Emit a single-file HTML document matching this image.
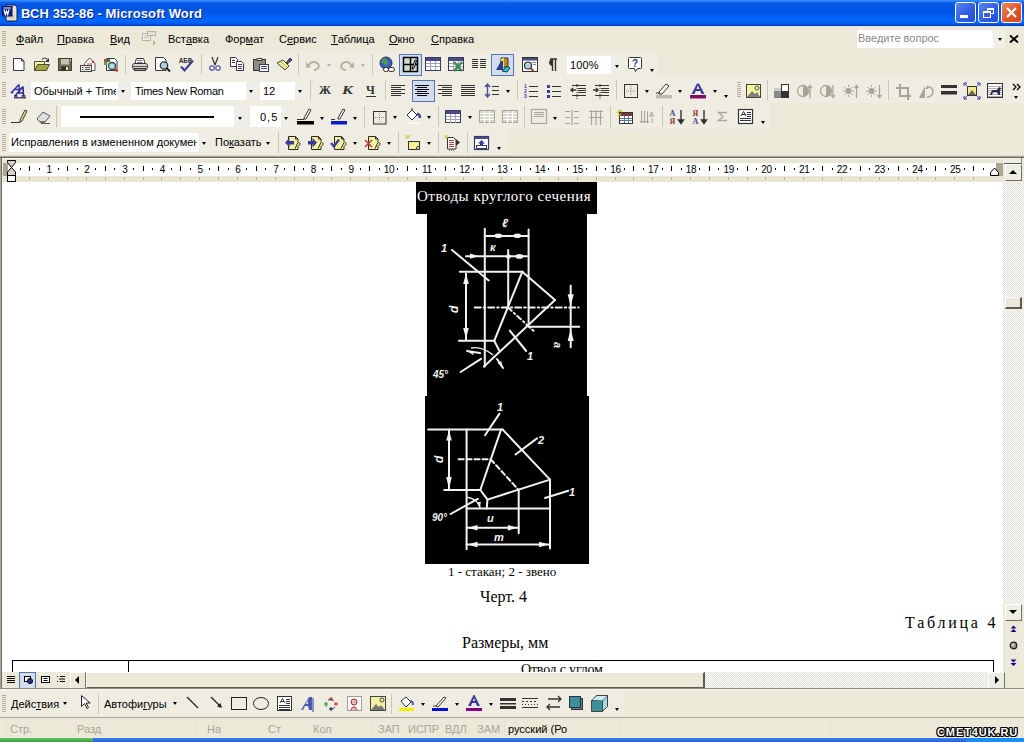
<!DOCTYPE html>
<html><head><meta charset="utf-8">
<style>
*{margin:0;padding:0;box-sizing:border-box}
html,body{width:1024px;height:742px;overflow:hidden;background:#ECE9D8;font-family:"Liberation Sans",sans-serif;font-size:11px;color:#000;position:relative}
.a{position:absolute;white-space:nowrap}
svg{overflow:visible}
.tb{background:#EFEDE2}
.grip{width:4px;background:repeating-linear-gradient(to bottom,#B4B09C 0 1px,transparent 1px 2px);border-left:1px solid transparent}
.wb{top:2px;width:21px;height:21px;border:1px solid #fff;border-radius:3px}
.ser{font-family:"Liberation Serif",serif}
.chk{background:repeating-conic-gradient(#FFFFFD 0 25%,#E2E0D6 0 50%) 0 0/2px 2px}
u{text-decoration:none;border-bottom:1px solid #000;display:inline-block;line-height:10px}
</style></head><body>

<div class="a" style="left:0;top:0;width:1024px;height:26px;background:linear-gradient(to bottom,#3D93FF 0px,#2A7FF6 1px,#0A5BE8 3px,#0054E3 8px,#0056E6 13px,#0062F6 17px,#0067FF 20px,#0062F4 23px,#0048D4 25px,#003AB0 26px)"></div>
<div class="a" style="left:0px;top:26px;width:1024px;height:1px;background:#DDE6F5"></div>
<div class="a" style="left:21px;top:6px;color:#fff;font-weight:bold;font-size:13px;letter-spacing:0.1px;text-shadow:1px 1px 0 #0A1E8C">ВСН 353-86 - Microsoft Word</div>
<svg class="a" style="left:2px;top:4px" width="17" height="17" viewBox="0 0 17 17"><path d="M4 1h9l2 2v14H4z" fill="#EDE6D6" stroke="#0A1A60" stroke-width="1"/><path d="M5 3h7M5 12h8M5 14h8" stroke="#C8B89A"/><rect x="0.5" y="2.5" width="9.5" height="9.5" fill="#0B1F8F" stroke="#081060"/><rect x="1.5" y="3.5" width="7.5" height="1" fill="#fff"/><path d="M2 5.5l1.3 5 1.2-3.5 1.2 3.5 1.3-5" stroke="#fff" stroke-width="1.3" fill="none"/></svg>
<div class="a wb" style="left:955px;background:linear-gradient(135deg,#5A86F5,#2E5BE0 60%,#2250D8)"><div class="a" style="left:4px;top:12px;width:8px;height:3px;background:#fff"></div></div>
<div class="a wb" style="left:978px;background:linear-gradient(135deg,#5A86F5,#2E5BE0 60%,#2250D8)"><div class="a" style="left:8px;top:5px;width:7px;height:6px;border:1px solid #fff;border-top-width:2px"></div><div class="a" style="left:4px;top:8px;width:8px;height:7px;border:1px solid #fff;border-top-width:2px;background:#3A62E4"></div></div>
<div class="a wb" style="left:1001px;background:linear-gradient(135deg,#EF8A64,#E2552C 55%,#D0431C)"><svg class="a" style="left:0;top:0" width="19" height="19"><path d="M5 5L14 14M14 5L5 14" stroke="#fff" stroke-width="2.2"/></svg></div>
<div class="a grip" style="left:2px;top:31px;height:16px"></div>
<div class="a" style="left:16px;top:33px;"><u>Ф</u>айл</div>
<div class="a" style="left:57px;top:33px;"><u>П</u>равка</div>
<div class="a" style="left:110px;top:33px;"><u>В</u>ид</div>
<div class="a" style="left:168px;top:33px;">Вст<u>а</u>вка</div>
<div class="a" style="left:225px;top:33px;">Фор<u>м</u>ат</div>
<div class="a" style="left:279px;top:33px;">С<u>е</u>рвис</div>
<div class="a" style="left:331px;top:33px;"><u>Т</u>аблица</div>
<div class="a" style="left:389px;top:33px;"><u>О</u>кно</div>
<div class="a" style="left:431px;top:33px;"><u>С</u>правка</div>
<svg class="a" style="left:141px;top:30px" width="17" height="17" viewBox="0 0 17 17"><rect x="1.5" y="3.5" width="8" height="7" fill="#F4F2EA" stroke="#B8B5A5"/><rect x="6.5" y="1.5" width="8" height="4" fill="#E4E1D4" stroke="#B8B5A5"/><path d="M3 6h5M3 8h5" stroke="#C0BDAE"/><path d="M12 10l3 3-3 3z" fill="#B8B5A5"/></svg>
<div class="a" style="left:857px;top:30px;width:136px;height:18px;background:#fff"></div>
<div class="a" style="left:993px;top:30px;width:12px;height:18px;background:#F0EFE8"></div>
<div class="a" style="left:858px;top:32px;color:#8C8C8C">Введите вопрос</div>
<div class="a" style="left:998px;top:38px;width:0;height:0;border-left:2.5px solid transparent;border-right:2.5px solid transparent;border-top:3px solid #000"></div>
<svg class="a" style="left:1009px;top:35px" width="10" height="8" viewBox="0 0 10 8"><path d="M1 0.5L9 7.5M9 0.5L1 7.5" stroke="#000" stroke-width="1.8"/></svg>
<div class="a" style="left:0px;top:51px;width:658px;height:26px;background:#EFEDE2"></div>
<div class="a" style="left:0px;top:77px;width:1024px;height:26px;background:#EFEDE2"></div>
<div class="a" style="left:0px;top:103px;width:770px;height:26px;background:#EFEDE2"></div>
<div class="a" style="left:0px;top:129px;width:507px;height:26px;background:#EFEDE2"></div>
<div class="a" style="left:0px;top:155px;width:1024px;height:1px;background:#E2DFD0"></div>
<div class="a" style="left:0px;top:156px;width:1024px;height:1px;background:#A6A394"></div>
<div class="a" style="left:0px;top:157px;width:1024px;height:1px;background:#6E6C5E"></div>
<div class="a grip" style="left:2px;top:56px;height:17px"></div>
<svg class="a" style="left:11px;top:56px" width="16" height="16" viewBox="0 0 16 16"><path d="M2.5 2.5h8l2.5 2.5v9.5h-10.5z" fill="#fff" stroke="#3A3A3A"/><path d="M10.5 2.5v2.5h2.5" fill="none" stroke="#3A3A3A"/></svg>
<svg class="a" style="left:33px;top:56px" width="17" height="16" viewBox="0 0 17 16"><path d="M1.5 5.5h4l1 1h5v2" fill="#F6F3B0" stroke="#505028"/><path d="M1.5 14.5v-9h10v3" fill="#F6F3B0" stroke="#505028"/><path d="M1.5 14.5l3-6h12l-3 6z" fill="#A6A448" stroke="#505028"/><path d="M9 3.5c1.5-2 4-2 5.5 0" stroke="#333" fill="none" stroke-width="1.2"/><path d="M16 2v4h-4z" fill="#333"/></svg>
<svg class="a" style="left:57px;top:56px" width="16" height="16" viewBox="0 0 16 16"><rect x="1.5" y="2.5" width="13" height="12" fill="#6E6D52" stroke="#3E3E2C"/><rect x="4" y="3" width="8" height="5.5" fill="#C4C2B0"/><rect x="4.5" y="10.5" width="7" height="4" fill="#2E2E22"/><rect x="9" y="11" width="2" height="3" fill="#E8E6D8"/><rect x="13" y="3.5" width="1" height="1.5" fill="#E8E6D8"/></svg>
<svg class="a" style="left:80px;top:56px" width="17" height="17" viewBox="0 0 17 17"><path d="M4.5 7.5l5-5.5 5.5 5.5v7h-10.5z" fill="#fff" stroke="#555"/><circle cx="13" cy="6" r="1.2" fill="#D03030"/><path d="M7 8h5" stroke="#C04040"/><rect x="0.5" y="9.5" width="11" height="6" fill="#ECEBDF" stroke="#444"/><path d="M2 11.5h1.5M5 11.5h5M2 13.5h1.5M5 13.5h5" stroke="#555"/></svg>
<svg class="a" style="left:103px;top:56px" width="16" height="17" viewBox="0 0 16 17"><path d="M3.5 2.5h8l2.5 2.5v9.5h-10.5z" fill="#fff" stroke="#3A3A3A"/><rect x="1" y="3" width="3" height="3" fill="#A05050"/><rect x="4" y="3" width="3" height="3" fill="#507050"/><rect x="1" y="6" width="3" height="3" fill="#6A9A50"/><rect x="4" y="6" width="3" height="3" fill="#E8E0A0"/><circle cx="9" cy="10" r="3.5" fill="#B8D8E4" stroke="#2A4A50" stroke-width="1.3"/><path d="M11.5 12.5l3 3" stroke="#C03030" stroke-width="2"/></svg>
<div class="a" style="left:125px;top:55px;width:1px;height:19px;background:#C9C6B6"></div>
<svg class="a" style="left:132px;top:56px" width="16" height="16" viewBox="0 0 16 16"><path d="M4.5 2.5h7l1 3v3h-9v-3z" fill="#fff" stroke="#333"/><path d="M5 4.5h5M5 6.5h5" stroke="#777"/><rect x="0.5" y="7.5" width="15" height="6" rx="2" fill="#D8D6CC" stroke="#333"/><path d="M1 10.5h14" stroke="#555"/><rect x="2.5" y="12.5" width="11" height="2" fill="#999" stroke="#333"/></svg>
<svg class="a" style="left:155px;top:56px" width="16" height="16" viewBox="0 0 16 16"><path d="M0.5 1.5h8l2.5 2.5v10.5h-10.5z" fill="#fff" stroke="#3A3A3A"/><circle cx="9" cy="9.5" r="3.7" fill="#B0D0DC" stroke="#333" stroke-width="1.3"/><path d="M11.5 12l3.5 3.5" stroke="#222" stroke-width="2"/></svg>
<svg class="a" style="left:178px;top:56px" width="16" height="16" viewBox="0 0 16 16"><text x="1" y="7" font-family="Liberation Mono" font-weight="bold" font-size="7" fill="#333" textLength="13" lengthAdjust="spacingAndGlyphs">АБВ</text><path d="M3 10.5l3.5 4 8.5-10" stroke="#3A3A9A" stroke-width="2" fill="none"/></svg>
<div class="a" style="left:201px;top:54px;width:1px;height:21px;background:#C9C6B6"></div>
<svg class="a" style="left:207px;top:56px" width="16" height="16" viewBox="0 0 16 16"><path d="M5 1l3 8M11 1l-3 8" stroke="#333" stroke-width="1.2"/><circle cx="5" cy="12" r="2.2" fill="#fff" stroke="#5A5AAA" stroke-width="1.3"/><circle cx="11" cy="12" r="2.2" fill="#fff" stroke="#5A5AAA" stroke-width="1.3"/></svg>
<svg class="a" style="left:229px;top:56px" width="16" height="16" viewBox="0 0 16 16"><path d="M1.5 1.5h5l2 2v7h-7z" fill="#fff" stroke="#333"/><path d="M3 4.5h3M3 6.5h3" stroke="#444"/><path d="M7.5 5.5h5l2 2v7h-7z" fill="#fff" stroke="#333"/><path d="M9 8.5h4M9 10.5h4M9 12.5h4" stroke="#3A3A9A"/></svg>
<svg class="a" style="left:253px;top:56px" width="16" height="16" viewBox="0 0 16 16"><rect x="0.5" y="3.5" width="12" height="11" fill="#8E8B76" stroke="#333"/><path d="M4 4.5v-2h5v2z" fill="#fff" stroke="#333"/><rect x="6.5" y="8.5" width="9" height="7" fill="#fff" stroke="#3A3A6A"/><path d="M8 10.5h6M8 12.5h6" stroke="#3A3A9A"/></svg>
<svg class="a" style="left:276px;top:56px" width="17" height="16" viewBox="0 0 17 16"><path d="M1 7l6-3 6 6-4 4z" fill="#F6F3A0" stroke="#444"/><path d="M3 8l6 5M5 6l6 5" stroke="#B8B060"/><path d="M10 7l4-5 2 2-5 4z" fill="#4A4A9A" stroke="#333"/></svg>
<div class="a" style="left:298px;top:54px;width:1px;height:21px;background:#C9C6B6"></div>
<svg class="a" style="left:305px;top:56px" width="16" height="16" viewBox="0 0 16 16"><path d="M4 11a5 4 0 1 1 5 3" stroke="#B5B2A2" stroke-width="2" fill="none"/><path d="M1 12l0-6 5 5z" fill="#B5B2A2"/></svg>
<div class="a" style="left:327px;top:64px;width:0;height:0;border-left:2.5px solid transparent;border-right:2.5px solid transparent;border-top:3px solid #B5B2A2"></div>
<svg class="a" style="left:339px;top:56px" width="16" height="16" viewBox="0 0 16 16"><path d="M12 11a5 4 0 1 0-5 3" stroke="#B5B2A2" stroke-width="2" fill="none"/><path d="M15 12l0-6-5 5z" fill="#B5B2A2"/></svg>
<div class="a" style="left:361px;top:64px;width:0;height:0;border-left:2.5px solid transparent;border-right:2.5px solid transparent;border-top:3px solid #B5B2A2"></div>
<div class="a" style="left:372px;top:54px;width:1px;height:21px;background:#C9C6B6"></div>
<svg class="a" style="left:379px;top:56px" width="16" height="17" viewBox="0 0 16 17"><circle cx="7" cy="7" r="6" fill="#3A5AC8" stroke="#334"/><path d="M5 2c3 1 5 3 4 6l-3 2-1-3-3 0c0-2 1-4 3-5z" fill="#4A9A5A"/><rect x="4.5" y="11.5" width="5" height="4" rx="2" fill="#fff" stroke="#222"/><rect x="9.5" y="11.5" width="6" height="4" rx="2" fill="#fff" stroke="#222"/></svg>
<div class="a" style="left:399px;top:54px;width:23px;height:22px;background:#D2DDF0;border:1px solid #5676AE"></div>
<svg class="a" style="left:403px;top:57px" width="15" height="15" viewBox="0 0 15 15"><rect x="0.5" y="0.5" width="14" height="14" fill="#D0DCD0" stroke="#000" stroke-width="1.5"/><path d="M7.5 0.5v14M0.5 7.5h14" stroke="#000" stroke-width="1.5"/><path d="M9 12l3-9 1.5 0.5-2.5 8z" fill="#fff" stroke="#000"/></svg>
<svg class="a" style="left:425px;top:57px" width="16" height="15" viewBox="0 0 16 15"><rect x="0.5" y="0.5" width="15" height="13" fill="#fff" stroke="#3A3A5A"/><rect x="1" y="1" width="14" height="3" fill="#4A4A8A"/><path d="M1 6.5h14M1 9.5h14M5.5 4v9M10.5 4v9" stroke="#A0A0C0"/></svg>
<svg class="a" style="left:448px;top:57px" width="16" height="16" viewBox="0 0 16 16"><rect x="0.5" y="0.5" width="15" height="13" fill="#fff" stroke="#3A3A5A"/><rect x="1" y="1" width="14" height="3" fill="#4A4A8A"/><path d="M1 6.5h14M1 9.5h14M5.5 4v9M10.5 4v9" stroke="#A0A0C0"/><path d="M6 5l8 9M14 5l-8 9" stroke="#3C8A4A" stroke-width="2.5"/></svg>
<svg class="a" style="left:471px;top:58px" width="16" height="12" viewBox="0 0 16 12"><path d="M1 1.5h6M1 3.5h6M1 5.5h6M1 7.5h6M1 9.5h6M9 1.5h6M9 3.5h6M9 5.5h6M9 7.5h6M9 9.5h6" stroke="#333" stroke-width="1.2"/></svg>
<div class="a" style="left:491px;top:54px;width:23px;height:22px;background:#D2DDF0;border:1px solid #5676AE"></div>
<svg class="a" style="left:495px;top:57px" width="16" height="16" viewBox="0 0 16 16"><path d="M6 1h7v9h-7z" fill="#B88A20" stroke="#333"/><path d="M6 2l3-1v9l-3 1z" fill="#F0E040"/><path d="M1 13l5-9 2 0 0 9z" fill="#2A3A9A"/><path d="M7 14l5-5 3 2-3 4z" fill="#20C0E0" stroke="#333"/></svg>
<svg class="a" style="left:522px;top:57px" width="16" height="16" viewBox="0 0 16 16"><rect x="0.5" y="0.5" width="15" height="14" fill="#fff" stroke="#333"/><rect x="1" y="1" width="14" height="2.5" fill="#4A4A8A"/><circle cx="6" cy="8.5" r="3.5" fill="#B0D0DC" stroke="#333" stroke-width="1.2"/><path d="M8.5 11l3 3" stroke="#B03030" stroke-width="2"/><path d="M10 5.5h4M11 7.5h3" stroke="#888"/></svg>
<svg class="a" style="left:545px;top:57px" width="14" height="16" viewBox="0 0 14 16"><path d="M7.5 14V2M10.5 14V2M5 2h7" stroke="#333" stroke-width="1.4"/><path d="M7.5 2.5a3 3 0 0 0 0 6z" fill="#333" stroke="#333"/></svg>
<div class="a" style="left:567px;top:56px;width:55px;height:18px;background:#fff"></div>
<div class="a" style="left:611px;top:56px;width:11px;height:18px;background:#EFEEE6"></div>
<div class="a" style="left:570px;top:59px;font-size:11px;letter-spacing:0.1px;line-height:13px">100%</div>
<div class="a" style="left:615px;top:65px;width:0;height:0;border-left:2.5px solid transparent;border-right:2.5px solid transparent;border-top:3px solid #000"></div>
<svg class="a" style="left:627px;top:56px" width="16" height="16" viewBox="0 0 16 16"><path d="M2.5 1.5h11a1 1 0 0 1 1 1v9a1 1 0 0 1-1 1h-3l-2 3-1-3h-5a1 1 0 0 1-1-1v-9a1 1 0 0 1 1-1z" fill="#fff" stroke="#333"/><text x="5" y="10.5" font-family="Liberation Sans" font-weight="bold" font-size="10" fill="#3A3A7A">?</text></svg>
<div class="a" style="left:650px;top:69px;width:0;height:0;border-left:2.5px solid transparent;border-right:2.5px solid transparent;border-top:3px solid #000"></div>
<div class="a grip" style="left:2px;top:82px;height:16px"></div>
<svg class="a" style="left:10px;top:83px" width="17" height="16" viewBox="0 0 17 16"><path d="M1.5 9.5L9 1.5M9 1.5L9.5 9.5M4 6.5h5.5M0.5 9.5h3" stroke="#3434A8" stroke-width="1.5" fill="none"/><path d="M5 13L13 3.5M13 3.5L13.5 13M8 10h5.5M4 13h3.5M11.5 13h4" stroke="#2A2A90" stroke-width="1.6" fill="none"/><path d="M4 14.8h12" stroke="#222244" stroke-width="1.2"/></svg>
<div class="a" style="left:31px;top:82px;width:88px;height:18px;background:#fff"></div>
<div class="a" style="left:118px;top:82px;width:11px;height:18px;background:#EFEEE6"></div>
<div class="a" style="left:34px;top:85px;width:82px;overflow:hidden;font-size:11px;line-height:13px">Обычный + Times New Roman</div>
<div class="a" style="left:121px;top:90px;width:0;height:0;border-left:2.5px solid transparent;border-right:2.5px solid transparent;border-top:3px solid #000"></div>
<div class="a" style="left:131px;top:82px;width:116px;height:18px;background:#fff"></div>
<div class="a" style="left:246px;top:82px;width:11px;height:18px;background:#EFEEE6"></div>
<div class="a" style="left:135px;top:85px;line-height:13px;letter-spacing:-0.3px">Times New Roman</div>
<div class="a" style="left:249px;top:90px;width:0;height:0;border-left:2.5px solid transparent;border-right:2.5px solid transparent;border-top:3px solid #000"></div>
<div class="a" style="left:260px;top:82px;width:36px;height:18px;background:#fff"></div>
<div class="a" style="left:295px;top:82px;width:11px;height:18px;background:#EFEEE6"></div>
<div class="a" style="left:263px;top:85px;line-height:13px">12</div>
<div class="a" style="left:298px;top:90px;width:0;height:0;border-left:2.5px solid transparent;border-right:2.5px solid transparent;border-top:3px solid #000"></div>
<div class="a" style="left:310px;top:80px;width:1px;height:20px;background:#C9C6B6"></div>
<div class="a" style="left:319px;top:83px;font-family:'Liberation Serif',serif;font-weight:bold;font-size:12px;color:#333">Ж</div>
<div class="a" style="left:342px;top:83px;font-family:'Liberation Serif',serif;font-weight:bold;font-style:italic;font-size:12px;color:#333;transform:scaleX(1.35);transform-origin:0 0">К</div>
<div class="a" style="left:366px;top:83px;font-family:'Liberation Serif',serif;font-weight:bold;font-size:12px;color:#333">Ч</div>
<div class="a" style="left:366px;top:96px;width:10px;height:1px;background:#333"></div>
<div class="a" style="left:385px;top:80px;width:1px;height:20px;background:#C9C6B6"></div>
<svg class="a" style="left:391px;top:84px" width="16" height="14" viewBox="0 0 16 14"><path d="M0 1.5h14M0 3.5h10M0 5.5h14M0 7.5h10M0 9.5h14M0 11.5h10" stroke="#333"/></svg>
<div class="a" style="left:412px;top:80px;width:23px;height:22px;background:#D2DDF0;border:1px solid #5676AE"></div>
<svg class="a" style="left:415px;top:84px" width="16" height="14" viewBox="0 0 16 14"><path d="M0 1.5h14M2 3.5h10M0 5.5h14M2 7.5h10M0 9.5h14M2 11.5h10" stroke="#000"/></svg>
<svg class="a" style="left:438px;top:84px" width="16" height="14" viewBox="0 0 16 14"><path d="M0 1.5h14M4 3.5h10M0 5.5h14M4 7.5h10M0 9.5h14M4 11.5h10" stroke="#333"/></svg>
<svg class="a" style="left:461px;top:84px" width="16" height="14" viewBox="0 0 16 14"><path d="M0 1.5h14M0 3.5h14M0 5.5h14M0 7.5h14M0 9.5h14M0 11.5h14" stroke="#333"/></svg>
<svg class="a" style="left:484px;top:83px" width="16" height="16" viewBox="0 0 16 16"><path d="M3.5 1v13M1 4l2.5-3 2.5 3M1 11l2.5 3 2.5-3" stroke="#4A4A9A" stroke-width="1.4" fill="none"/><path d="M8 3.5h7M8 7.5h7M8 11.5h7" stroke="#333"/></svg>
<div class="a" style="left:506px;top:90px;width:0;height:0;border-left:2.5px solid transparent;border-right:2.5px solid transparent;border-top:3px solid #000"></div>
<div class="a" style="left:517px;top:80px;width:1px;height:20px;background:#C9C6B6"></div>
<svg class="a" style="left:524px;top:83px" width="16" height="16" viewBox="0 0 16 16"><text x="0" y="5" font-size="5" font-family="Liberation Sans" font-weight="bold" fill="#3A3A9A">1</text><text x="0" y="10" font-size="5" font-family="Liberation Sans" font-weight="bold" fill="#3A3A9A">2</text><text x="0" y="15" font-size="5" font-family="Liberation Sans" font-weight="bold" fill="#3A3A9A">3</text><path d="M5 3.5h9M5 8.5h9M5 13.5h9" stroke="#333"/></svg>
<svg class="a" style="left:547px;top:83px" width="16" height="16" viewBox="0 0 16 16"><rect x="0" y="2" width="3" height="3" fill="#3A3A9A"/><rect x="0" y="7" width="3" height="3" fill="#3A3A9A"/><rect x="0" y="12" width="3" height="3" fill="#3A3A9A"/><path d="M5 3.5h9M5 8.5h9M5 13.5h9" stroke="#333"/></svg>
<svg class="a" style="left:570px;top:83px" width="16" height="16" viewBox="0 0 16 16"><path d="M2 2.5h14M8 5.5h8M8 7.5h8M8 9.5h8M2 12.5h14" stroke="#333"/><path d="M6 7H1M3 5l-2 2 2 2" stroke="#333" stroke-width="1.4" fill="none"/><path d="M7 1v15" stroke="#333" stroke-dasharray="1 1"/></svg>
<svg class="a" style="left:593px;top:83px" width="16" height="16" viewBox="0 0 16 16"><path d="M2 2.5h14M8 5.5h8M8 7.5h8M8 9.5h8M2 12.5h14" stroke="#333"/><path d="M0 7h5M3 5l2 2-2 2" stroke="#333" stroke-width="1.4" fill="none"/><path d="M7 1v15" stroke="#333" stroke-dasharray="1 1"/></svg>
<div class="a" style="left:616px;top:80px;width:1px;height:20px;background:#C9C6B6"></div>
<svg class="a" style="left:624px;top:84px" width="14" height="14" viewBox="0 0 14 14"><rect x="0.5" y="0.5" width="13" height="13" fill="none" stroke="#333"/><path d="M7 2v10M2 7h10" stroke="#888" stroke-dasharray="1 1"/></svg>
<div class="a" style="left:645px;top:90px;width:0;height:0;border-left:2.5px solid transparent;border-right:2.5px solid transparent;border-top:3px solid #000"></div>
<svg class="a" style="left:656px;top:83px" width="16" height="16" viewBox="0 0 16 16"><path d="M3 9l7-8 3 2-7 8h-3z" fill="#fff" stroke="#333"/><path d="M0 10h4" stroke="#333"/><rect x="0" y="12" width="16" height="3.5" fill="#BDBBB4"/></svg>
<div class="a" style="left:678px;top:90px;width:0;height:0;border-left:2.5px solid transparent;border-right:2.5px solid transparent;border-top:3px solid #000"></div>
<svg class="a" style="left:690px;top:83px" width="16" height="16" viewBox="0 0 16 16"><path d="M1.5 11L7 0.5h2L14.5 11h-3l-1.2-3H5.7L4.5 11zM6.5 6h3L8 2.5z" fill="#3A3A9A"/><rect x="0" y="12" width="16" height="3.5" fill="#7A106A"/></svg>
<div class="a" style="left:713px;top:90px;width:0;height:0;border-left:2.5px solid transparent;border-right:2.5px solid transparent;border-top:3px solid #000"></div>
<div class="a" style="left:724px;top:95px;width:0;height:0;border-left:2.5px solid transparent;border-right:2.5px solid transparent;border-top:3px solid #000"></div>
<div class="a grip" style="left:737px;top:82px;height:16px"></div>
<svg class="a" style="left:746px;top:84px" width="16" height="15" viewBox="0 0 16 15"><rect x="0.5" y="0.5" width="14" height="13" fill="#F6F2A0" stroke="#444"/><path d="M1 13l5-6 3 3 2-2 3 5z" fill="#808080"/><circle cx="11" cy="4" r="2" fill="none" stroke="#555"/></svg>
<div class="a" style="left:767px;top:80px;width:1px;height:20px;background:#C9C6B6"></div>
<svg class="a" style="left:774px;top:84px" width="16" height="15" viewBox="0 0 16 15"><rect x="0" y="4" width="7" height="10" fill="#888" /><path d="M0 4h7v3H0z" fill="#ccc"/><rect x="7.5" y="0.5" width="7" height="13" fill="#fff" stroke="#333"/><rect x="8" y="7" width="6" height="6.5" fill="#333"/></svg>
<svg class="a" style="left:797px;top:84px" width="16" height="16" viewBox="0 0 16 16"><circle cx="6" cy="7" r="5.5" fill="none" stroke="#A8A598" stroke-width="1.3"/><path d="M6 1.5a5.5 5.5 0 0 1 0 11z" fill="#A8A598"/><path d="M13 14V2M11 4l2-2.5 2 2.5" stroke="#A8A598" stroke-width="1.3" fill="none"/></svg>
<svg class="a" style="left:820px;top:84px" width="16" height="16" viewBox="0 0 16 16"><circle cx="6" cy="7" r="5.5" fill="none" stroke="#A8A598" stroke-width="1.3"/><path d="M6 1.5a5.5 5.5 0 0 1 0 11z" fill="#A8A598"/><path d="M13 1v12M11 11l2 2.5 2-2.5" stroke="#A8A598" stroke-width="1.3" fill="none"/></svg>
<svg class="a" style="left:843px;top:84px" width="16" height="16" viewBox="0 0 16 16"><circle cx="5.5" cy="7" r="3" fill="#A8A598"/><path d="M5.5 1v2M5.5 11v2M0 7h2M9 7h2M1.5 3l1.5 1.5M8 9.5l1.5 1.5M1.5 11L3 9.5M8 4.5L9.5 3" stroke="#A8A598"/><path d="M13.5 14V2M11.5 4l2-2.5 2 2.5" stroke="#A8A598" stroke-width="1.3" fill="none"/></svg>
<svg class="a" style="left:866px;top:84px" width="16" height="16" viewBox="0 0 16 16"><circle cx="5.5" cy="7" r="3" fill="#A8A598"/><path d="M5.5 1v2M5.5 11v2M0 7h2M9 7h2M1.5 3l1.5 1.5M8 9.5l1.5 1.5M1.5 11L3 9.5M8 4.5L9.5 3" stroke="#A8A598"/><path d="M13.5 1v12M11.5 11l2 2.5 2-2.5" stroke="#A8A598" stroke-width="1.3" fill="none"/></svg>
<div class="a" style="left:888px;top:80px;width:1px;height:20px;background:#C9C6B6"></div>
<svg class="a" style="left:896px;top:84px" width="16" height="16" viewBox="0 0 16 16"><path d="M4 0v12h11M0 4h12v12" stroke="#A8A598" stroke-width="2" fill="none"/></svg>
<svg class="a" style="left:918px;top:84px" width="16" height="16" viewBox="0 0 16 16"><path d="M1 14l6-12v12z" fill="#A8A598"/><path d="M9 13c3 0 6-2 6-5s-2-5-5-5" stroke="#A8A598" stroke-width="1.4" fill="none"/><path d="M10 1v4h-3z" fill="#A8A598"/></svg>
<svg class="a" style="left:941px;top:84px" width="16" height="12" viewBox="0 0 16 12"><rect x="0" y="1" width="16" height="3" fill="#333"/><rect x="0" y="7" width="16" height="3.5" fill="#333"/></svg>
<svg class="a" style="left:964px;top:83px" width="16" height="16" viewBox="0 0 16 16"><rect x="3.5" y="3.5" width="9" height="9" fill="#F0EC80" stroke="#333"/><path d="M4 12l4-5 4 5z" fill="#666"/><path d="M0 0l4 4M16 0l-4 4M0 16l4-4M16 16l-4-4M0 3V0h3M13 0h3v3M0 13v3h3M13 16h3v-3" stroke="#3A3AAA" fill="none"/></svg>
<svg class="a" style="left:987px;top:83px" width="16" height="16" viewBox="0 0 16 16"><rect x="0.5" y="0.5" width="15" height="14" fill="#fff" stroke="#333"/><path d="M1 3.5h14M1 5.5h14M1 7.5h14M1 9.5h14M1 11.5h14M1 13.5h14" stroke="#B0B0B0"/><path d="M3 12l2-5h5l2-3 2 1-1 3v4h-2l-1-3h-4l-1 3z" fill="#2A2A4A"/></svg>
<svg class="a" style="left:1012px;top:83px" width="10" height="8" viewBox="0 0 10 8"><path d="M1 1l3 3-3 3M5 1l3 3-3 3" stroke="#000" stroke-width="1.3" fill="none"/></svg>
<div class="a" style="left:1014px;top:96px;width:0;height:0;border-left:2.5px solid transparent;border-right:2.5px solid transparent;border-top:3px solid #000"></div>
<div class="a grip" style="left:2px;top:109px;height:15px"></div>
<svg class="a" style="left:11px;top:109px" width="16" height="15" viewBox="0 0 16 15"><path d="M9 11l5-10 2 1-5 10-2 1z" fill="#F0EC90" stroke="#333"/><path d="M0 13.5h9" stroke="#333"/></svg>
<svg class="a" style="left:36px;top:110px" width="16" height="15" viewBox="0 0 16 15"><path d="M1 9l6-7 7 4-5 6H4z" fill="#E0E0E0" stroke="#555"/><path d="M1 9l3 3h5" fill="none" stroke="#555"/><path d="M5 13.5h9" stroke="#555"/></svg>
<div class="a" style="left:56px;top:106px;width:1px;height:21px;background:#C9C6B6"></div>
<div class="a" style="left:61px;top:106px;width:173px;height:21px;background:#fff"></div>
<div class="a" style="left:234px;top:106px;width:13px;height:21px;background:#EFEEE6"></div>
<div class="a" style="left:80px;top:116px;width:134px;height:1.5px;background:#000"></div>
<div class="a" style="left:238px;top:117px;width:0;height:0;border-left:2.5px solid transparent;border-right:2.5px solid transparent;border-top:3px solid #000"></div>
<div class="a" style="left:250px;top:106px;width:32px;height:21px;background:#fff"></div>
<div class="a" style="left:281px;top:106px;width:11px;height:21px;background:#EFEEE6"></div>
<div class="a" style="left:260px;top:111px;font-size:11px;line-height:13px;letter-spacing:1px">0,5</div>
<div class="a" style="left:284px;top:117px;width:0;height:0;border-left:2.5px solid transparent;border-right:2.5px solid transparent;border-top:3px solid #000"></div>
<svg class="a" style="left:297px;top:108px" width="17" height="17" viewBox="0 0 17 17"><path d="M7 10l5-9 2 1-5 9h-2z" fill="#fff" stroke="#333"/><path d="M0 11.5h7" stroke="#333"/><rect x="0" y="13" width="17" height="3.5" fill="#000"/></svg>
<div class="a" style="left:320px;top:117px;width:0;height:0;border-left:2.5px solid transparent;border-right:2.5px solid transparent;border-top:3px solid #000"></div>
<svg class="a" style="left:331px;top:108px" width="17" height="17" viewBox="0 0 17 17"><path d="M7 10l5-9 2 1-5 9h-2z" fill="#fff" stroke="#333"/><path d="M0 11.5h4" stroke="#333"/><rect x="0" y="13" width="16" height="3.5" fill="#0A1ACA"/></svg>
<div class="a" style="left:353px;top:117px;width:0;height:0;border-left:2.5px solid transparent;border-right:2.5px solid transparent;border-top:3px solid #000"></div>
<div class="a" style="left:364px;top:106px;width:1px;height:21px;background:#C9C6B6"></div>
<svg class="a" style="left:373px;top:111px" width="14" height="14" viewBox="0 0 14 14"><rect x="0.5" y="0.5" width="12.5" height="12.5" fill="none" stroke="#333"/><path d="M6.5 2v10M2 6.5h10" stroke="#888" stroke-dasharray="1 1"/></svg>
<div class="a" style="left:393px;top:116px;width:0;height:0;border-left:2.5px solid transparent;border-right:2.5px solid transparent;border-top:3px solid #000"></div>
<svg class="a" style="left:406px;top:108px" width="16" height="16" viewBox="0 0 16 16"><path d="M1 7l5-5 5 5-5 5z" fill="#fff" stroke="#333"/><path d="M6 2V0" stroke="#333"/><path d="M11 6c2 0 3 2 3 4" stroke="#4A4A9A" stroke-width="2.5" fill="none"/><rect x="1" y="14" width="14" height="2" fill="#F8F8F0"/></svg>
<div class="a" style="left:427px;top:116px;width:0;height:0;border-left:2.5px solid transparent;border-right:2.5px solid transparent;border-top:3px solid #000"></div>
<div class="a" style="left:438px;top:106px;width:1px;height:21px;background:#C9C6B6"></div>
<svg class="a" style="left:445px;top:110px" width="16" height="14" viewBox="0 0 16 14"><rect x="0.5" y="0.5" width="15" height="12" fill="#fff" stroke="#3A3A5A"/><rect x="1" y="1" width="14" height="3" fill="#4A4A8A"/><path d="M1 6.5h14M1 9.5h14M5.5 4v9M10.5 4v9" stroke="#A0A0C0"/></svg>
<div class="a" style="left:468px;top:116px;width:0;height:0;border-left:2.5px solid transparent;border-right:2.5px solid transparent;border-top:3px solid #000"></div>
<svg class="a" style="left:479px;top:110px" width="16" height="14" viewBox="0 0 16 14"><rect x="0.5" y="0.5" width="15" height="12" fill="#D8D6CA" stroke="#A8A598"/><path d="M1 3.5h14M1 6.5h14M1 9.5h14M5.5 1v12M10.5 1v12" stroke="#fff"/></svg>
<svg class="a" style="left:502px;top:110px" width="16" height="14" viewBox="0 0 16 14"><rect x="0.5" y="0.5" width="15" height="12" fill="#D8D6CA" stroke="#A8A598"/><path d="M1 3.5h14M1 6.5h14M1 9.5h14M5.5 1v12M10.5 1v12" stroke="#fff"/></svg>
<div class="a" style="left:524px;top:106px;width:1px;height:21px;background:#C9C6B6"></div>
<svg class="a" style="left:531px;top:109px" width="16" height="16" viewBox="0 0 16 16"><rect x="0.5" y="0.5" width="15" height="14" fill="none" stroke="#A8A598" stroke-width="1.2"/><path d="M3 3.5h10M3 5.5h10M3 7.5h10" stroke="#A8A598"/></svg>
<div class="a" style="left:553px;top:117px;width:0;height:0;border-left:2.5px solid transparent;border-right:2.5px solid transparent;border-top:3px solid #000"></div>
<svg class="a" style="left:565px;top:110px" width="16" height="16" viewBox="0 0 16 16"><path d="M0 1.5h5M0 7.5h5M0 13.5h5M9 1.5h5M9 7.5h5M9 13.5h5M7 0v15" stroke="#A8A598" stroke-width="1.2"/></svg>
<svg class="a" style="left:589px;top:110px" width="16" height="16" viewBox="0 0 16 16"><path d="M0 1.5h14M0 7.5h14M2.5 0v15M7 0v15M11.5 0v15" stroke="#A8A598" stroke-width="1.2"/></svg>
<div class="a" style="left:610px;top:106px;width:1px;height:21px;background:#C9C6B6"></div>
<svg class="a" style="left:617px;top:109px" width="16" height="16" viewBox="0 0 16 16"><rect x="2.5" y="3.5" width="13" height="11" fill="#fff" stroke="#333"/><rect x="3" y="4" width="12" height="3" fill="#7A3A3A"/><path d="M3 9.5h12M3 11.5h12M7.5 7v7M11.5 7v7" stroke="#5A7A9A"/><path d="M0 4l4-3M1 7l3-2M3 1l2 2" stroke="#C0C020" stroke-width="1.3"/></svg>
<svg class="a" style="left:640px;top:109px" width="16" height="16" viewBox="0 0 16 16"><path d="M1.5 2v12M4.5 2v12M7.5 2v12M0 12l1.5 2 1.5-2M3 12l1.5 2 1.5-2M6 12l1.5 2 1.5-2" stroke="#A8A598" fill="none"/><text x="9" y="8" font-size="7" font-family="Liberation Sans" font-weight="bold" fill="#A8A598">A</text><path d="M12 9v5" stroke="#A8A598"/></svg>
<div class="a" style="left:662px;top:106px;width:1px;height:21px;background:#C9C6B6"></div>
<svg class="a" style="left:669px;top:109px" width="16" height="16" viewBox="0 0 16 16"><text x="0.5" y="7" font-size="8" font-family="Liberation Serif" font-weight="bold" fill="#3A3A8A">A</text><text x="0.5" y="15" font-size="8" font-family="Liberation Serif" font-weight="bold" fill="#8A3A2A">Я</text><path d="M12 1v13M9.5 11l2.5 3.5 2.5-3.5z" stroke="#333" stroke-width="1.4" fill="#333"/></svg>
<svg class="a" style="left:692px;top:109px" width="16" height="16" viewBox="0 0 16 16"><text x="0.5" y="7" font-size="8" font-family="Liberation Serif" font-weight="bold" fill="#8A3A2A">Я</text><text x="0.5" y="15" font-size="8" font-family="Liberation Serif" font-weight="bold" fill="#3A3A8A">A</text><path d="M12 1v13M9.5 11l2.5 3.5 2.5-3.5z" stroke="#333" stroke-width="1.4" fill="#333"/></svg>
<svg class="a" style="left:717px;top:111px" width="12" height="12" viewBox="0 0 12 12"><path d="M10 1.5H1.5l4.5 4-4.5 4H10" stroke="#A8A598" stroke-width="1.3" fill="none"/></svg>
<svg class="a" style="left:738px;top:109px" width="16" height="16" viewBox="0 0 16 16"><rect x="0.5" y="0.5" width="14" height="14" fill="#fff" stroke="#333" stroke-width="1.2"/><path d="M3 7l2.5-4.5 2.5 4.5M3.5 5.5h4" stroke="#333" fill="none"/><path d="M9 3.5h4M9 5.5h4M9 7.5h4M2 9.5h11M2 11.5h11" stroke="#333"/></svg>
<div class="a" style="left:761px;top:121px;width:0;height:0;border-left:2.5px solid transparent;border-right:2.5px solid transparent;border-top:3px solid #000"></div>
<div class="a grip" style="left:2px;top:134px;height:17px"></div>
<div class="a" style="left:9px;top:133px;width:190px;height:19px;background:#fff"></div>
<div class="a" style="left:199px;top:133px;width:12px;height:19px;background:#EFEEE6"></div>
<div class="a" style="left:11px;top:136px;width:186px;overflow:hidden;line-height:13px">Исправления в измененном документе</div>
<div class="a" style="left:202px;top:142px;width:0;height:0;border-left:2.5px solid transparent;border-right:2.5px solid transparent;border-top:3px solid #000"></div>
<div class="a" style="left:215px;top:136px;line-height:13px">По<u>к</u>азать</div>
<div class="a" style="left:266px;top:142px;width:0;height:0;border-left:2.5px solid transparent;border-right:2.5px solid transparent;border-top:3px solid #000"></div>
<div class="a" style="left:278px;top:132px;width:1px;height:21px;background:#C9C6B6"></div>
<svg class="a" style="left:285px;top:135px" width="17" height="16" viewBox="0 0 17 16"><path d="M3.5 1.5h7l2.5 2.5v2.5l2.5 2.5-2.5 2.5v3h-9.5z" fill="#F4F0A0" stroke="#2A2A1A"/><path d="M10.5 1.5v2.5h2.5M13 7.5l-3 6" fill="none" stroke="#2A2A1A"/><path d="M0 7.5l4.5-4.5v3h4.5v3.5h-4.5v3z" fill="#3A3A9A"/></svg>
<svg class="a" style="left:308px;top:135px" width="17" height="16" viewBox="0 0 17 16"><path d="M3.5 1.5h7l2.5 2.5v2.5l2.5 2.5-2.5 2.5v3h-9.5z" fill="#F4F0A0" stroke="#2A2A1A"/><path d="M10.5 1.5v2.5h2.5M13 7.5l-3 6" fill="none" stroke="#2A2A1A"/><path d="M9 7.5L4.5 3v3H0v3.5h4.5v3z" fill="#3A3A9A"/></svg>
<svg class="a" style="left:331px;top:135px" width="17" height="16" viewBox="0 0 17 16"><path d="M3.5 1.5h7l2.5 2.5v2.5l2.5 2.5-2.5 2.5v3h-9.5z" fill="#F4F0A0" stroke="#2A2A1A"/><path d="M10.5 1.5v2.5h2.5M13 7.5l-3 6" fill="none" stroke="#2A2A1A"/><path d="M0 8l3 3.5 5-7" stroke="#3A3A9A" stroke-width="2.2" fill="none"/></svg>
<div class="a" style="left:353px;top:142px;width:0;height:0;border-left:2.5px solid transparent;border-right:2.5px solid transparent;border-top:3px solid #000"></div>
<svg class="a" style="left:365px;top:135px" width="17" height="16" viewBox="0 0 17 16"><path d="M3.5 1.5h7l2.5 2.5v2.5l2.5 2.5-2.5 2.5v3h-9.5z" fill="#F4F0A0" stroke="#2A2A1A"/><path d="M10.5 1.5v2.5h2.5M13 7.5l-3 6" fill="none" stroke="#2A2A1A"/><path d="M0 5l7 7M7 5l-7 7" stroke="#C04040" stroke-width="1.6"/></svg>
<div class="a" style="left:387px;top:142px;width:0;height:0;border-left:2.5px solid transparent;border-right:2.5px solid transparent;border-top:3px solid #000"></div>
<div class="a" style="left:398px;top:132px;width:1px;height:21px;background:#C9C6B6"></div>
<svg class="a" style="left:405px;top:135px" width="16" height="16" viewBox="0 0 16 16"><rect x="3.5" y="6.5" width="11" height="8" fill="#F6F296" stroke="#333"/><circle cx="13" cy="13" r="1.5" fill="#fff" stroke="#333"/><path d="M0 0l3 3M3 0v3M0 3h3M6 0l-3 3" stroke="#C8C840"/></svg>
<div class="a" style="left:427px;top:142px;width:0;height:0;border-left:2.5px solid transparent;border-right:2.5px solid transparent;border-top:3px solid #000"></div>
<div class="a" style="left:438px;top:132px;width:1px;height:21px;background:#C9C6B6"></div>
<svg class="a" style="left:444px;top:135px" width="16" height="16" viewBox="0 0 16 16"><path d="M3.5 2.5h6l2.5 2.5v9h-8.5z" fill="#fff" stroke="#333"/><path d="M5 5.5h5M5 7.5h5M5 9.5h5M5 11.5h5" stroke="#D04040"/><path d="M12 4l4 3.5-4 3.5z" fill="#333"/><path d="M0 0l3 3M3 0v3M0 3h3" stroke="#C8C840"/><path d="M5 15h1M7 15h1M9 15h1" stroke="#333"/></svg>
<div class="a" style="left:467px;top:132px;width:1px;height:21px;background:#C9C6B6"></div>
<svg class="a" style="left:474px;top:136px" width="16" height="16" viewBox="0 0 16 16"><rect x="0.5" y="0.5" width="14" height="13" fill="#fff" stroke="#3A3A6A" stroke-width="1.2"/><rect x="1" y="1" width="13" height="2" fill="#4A4A8A"/><path d="M7.5 4l-3.5 3.5h2v2h3v-2h2z" fill="#3A3AA0"/><rect x="2.5" y="9.5" width="10" height="3" fill="none" stroke="#3A3A6A"/></svg>
<div class="a" style="left:497px;top:147px;width:0;height:0;border-left:2.5px solid transparent;border-right:2.5px solid transparent;border-top:3px solid #000"></div>
<div class="a" style="left:0px;top:158px;width:1003px;height:1px;background:#F8F6EC"></div>
<div class="a" style="left:0px;top:159px;width:1003px;height:23px;background:#E9E6D6"></div>
<div class="a" style="left:3px;top:163px;width:1000px;height:13px;background:#FFFFFF"></div>
<div class="a" style="left:3px;top:163px;width:5px;height:13px;background:#A9A697"></div>
<div class="a" style="left:996px;top:163px;width:8px;height:13px;background:#A9A697"></div>
<div class="a" style="left:20px;top:168px;width:1px;height:2px;background:#000"></div>
<div class="a" style="left:29px;top:166px;width:1px;height:5px;background:#000"></div>
<div class="a" style="left:39px;top:168px;width:1px;height:2px;background:#000"></div>
<div class="a" style="left:11px;top:177px;width:1px;height:3px;background:#B4B19F"></div>
<div class="a" style="left:29px;top:177px;width:1px;height:3px;background:#B4B19F"></div>
<div class="a" style="left:39.2px;top:164px;width:20px;text-align:center;font-size:10px;line-height:11px;letter-spacing:-0.3px">1</div>
<div class="a" style="left:58px;top:168px;width:1px;height:2px;background:#000"></div>
<div class="a" style="left:67px;top:166px;width:1px;height:5px;background:#000"></div>
<div class="a" style="left:77px;top:168px;width:1px;height:2px;background:#000"></div>
<div class="a" style="left:48px;top:177px;width:1px;height:3px;background:#B4B19F"></div>
<div class="a" style="left:67px;top:177px;width:1px;height:3px;background:#B4B19F"></div>
<div class="a" style="left:77.0px;top:164px;width:20px;text-align:center;font-size:10px;line-height:11px;letter-spacing:-0.3px">2</div>
<div class="a" style="left:95px;top:168px;width:1px;height:2px;background:#000"></div>
<div class="a" style="left:105px;top:166px;width:1px;height:5px;background:#000"></div>
<div class="a" style="left:114px;top:168px;width:1px;height:2px;background:#000"></div>
<div class="a" style="left:86px;top:177px;width:1px;height:3px;background:#B4B19F"></div>
<div class="a" style="left:105px;top:177px;width:1px;height:3px;background:#B4B19F"></div>
<div class="a" style="left:114.8px;top:164px;width:20px;text-align:center;font-size:10px;line-height:11px;letter-spacing:-0.3px">3</div>
<div class="a" style="left:133px;top:168px;width:1px;height:2px;background:#000"></div>
<div class="a" style="left:143px;top:166px;width:1px;height:5px;background:#000"></div>
<div class="a" style="left:152px;top:168px;width:1px;height:2px;background:#000"></div>
<div class="a" style="left:124px;top:177px;width:1px;height:3px;background:#B4B19F"></div>
<div class="a" style="left:143px;top:177px;width:1px;height:3px;background:#B4B19F"></div>
<div class="a" style="left:152.5px;top:164px;width:20px;text-align:center;font-size:10px;line-height:11px;letter-spacing:-0.3px">4</div>
<div class="a" style="left:171px;top:168px;width:1px;height:2px;background:#000"></div>
<div class="a" style="left:180px;top:166px;width:1px;height:5px;background:#000"></div>
<div class="a" style="left:190px;top:168px;width:1px;height:2px;background:#000"></div>
<div class="a" style="left:161px;top:177px;width:1px;height:3px;background:#B4B19F"></div>
<div class="a" style="left:180px;top:177px;width:1px;height:3px;background:#B4B19F"></div>
<div class="a" style="left:190.2px;top:164px;width:20px;text-align:center;font-size:10px;line-height:11px;letter-spacing:-0.3px">5</div>
<div class="a" style="left:209px;top:168px;width:1px;height:2px;background:#000"></div>
<div class="a" style="left:218px;top:166px;width:1px;height:5px;background:#000"></div>
<div class="a" style="left:228px;top:168px;width:1px;height:2px;background:#000"></div>
<div class="a" style="left:199px;top:177px;width:1px;height:3px;background:#B4B19F"></div>
<div class="a" style="left:218px;top:177px;width:1px;height:3px;background:#B4B19F"></div>
<div class="a" style="left:228.0px;top:164px;width:20px;text-align:center;font-size:10px;line-height:11px;letter-spacing:-0.3px">6</div>
<div class="a" style="left:246px;top:168px;width:1px;height:2px;background:#000"></div>
<div class="a" style="left:256px;top:166px;width:1px;height:5px;background:#000"></div>
<div class="a" style="left:265px;top:168px;width:1px;height:2px;background:#000"></div>
<div class="a" style="left:237px;top:177px;width:1px;height:3px;background:#B4B19F"></div>
<div class="a" style="left:256px;top:177px;width:1px;height:3px;background:#B4B19F"></div>
<div class="a" style="left:265.8px;top:164px;width:20px;text-align:center;font-size:10px;line-height:11px;letter-spacing:-0.3px">7</div>
<div class="a" style="left:284px;top:168px;width:1px;height:2px;background:#000"></div>
<div class="a" style="left:294px;top:166px;width:1px;height:5px;background:#000"></div>
<div class="a" style="left:303px;top:168px;width:1px;height:2px;background:#000"></div>
<div class="a" style="left:275px;top:177px;width:1px;height:3px;background:#B4B19F"></div>
<div class="a" style="left:294px;top:177px;width:1px;height:3px;background:#B4B19F"></div>
<div class="a" style="left:303.5px;top:164px;width:20px;text-align:center;font-size:10px;line-height:11px;letter-spacing:-0.3px">8</div>
<div class="a" style="left:322px;top:168px;width:1px;height:2px;background:#000"></div>
<div class="a" style="left:331px;top:166px;width:1px;height:5px;background:#000"></div>
<div class="a" style="left:341px;top:168px;width:1px;height:2px;background:#000"></div>
<div class="a" style="left:313px;top:177px;width:1px;height:3px;background:#B4B19F"></div>
<div class="a" style="left:331px;top:177px;width:1px;height:3px;background:#B4B19F"></div>
<div class="a" style="left:341.2px;top:164px;width:20px;text-align:center;font-size:10px;line-height:11px;letter-spacing:-0.3px">9</div>
<div class="a" style="left:360px;top:168px;width:1px;height:2px;background:#000"></div>
<div class="a" style="left:369px;top:166px;width:1px;height:5px;background:#000"></div>
<div class="a" style="left:379px;top:168px;width:1px;height:2px;background:#000"></div>
<div class="a" style="left:350px;top:177px;width:1px;height:3px;background:#B4B19F"></div>
<div class="a" style="left:369px;top:177px;width:1px;height:3px;background:#B4B19F"></div>
<div class="a" style="left:379.0px;top:164px;width:20px;text-align:center;font-size:10px;line-height:11px;letter-spacing:-0.3px">10</div>
<div class="a" style="left:397px;top:168px;width:1px;height:2px;background:#000"></div>
<div class="a" style="left:407px;top:166px;width:1px;height:5px;background:#000"></div>
<div class="a" style="left:416px;top:168px;width:1px;height:2px;background:#000"></div>
<div class="a" style="left:388px;top:177px;width:1px;height:3px;background:#B4B19F"></div>
<div class="a" style="left:407px;top:177px;width:1px;height:3px;background:#B4B19F"></div>
<div class="a" style="left:416.8px;top:164px;width:20px;text-align:center;font-size:10px;line-height:11px;letter-spacing:-0.3px">11</div>
<div class="a" style="left:435px;top:168px;width:1px;height:2px;background:#000"></div>
<div class="a" style="left:445px;top:166px;width:1px;height:5px;background:#000"></div>
<div class="a" style="left:454px;top:168px;width:1px;height:2px;background:#000"></div>
<div class="a" style="left:426px;top:177px;width:1px;height:3px;background:#B4B19F"></div>
<div class="a" style="left:445px;top:177px;width:1px;height:3px;background:#B4B19F"></div>
<div class="a" style="left:454.5px;top:164px;width:20px;text-align:center;font-size:10px;line-height:11px;letter-spacing:-0.3px">12</div>
<div class="a" style="left:473px;top:168px;width:1px;height:2px;background:#000"></div>
<div class="a" style="left:482px;top:166px;width:1px;height:5px;background:#000"></div>
<div class="a" style="left:492px;top:168px;width:1px;height:2px;background:#000"></div>
<div class="a" style="left:463px;top:177px;width:1px;height:3px;background:#B4B19F"></div>
<div class="a" style="left:482px;top:177px;width:1px;height:3px;background:#B4B19F"></div>
<div class="a" style="left:492.2px;top:164px;width:20px;text-align:center;font-size:10px;line-height:11px;letter-spacing:-0.3px">13</div>
<div class="a" style="left:511px;top:168px;width:1px;height:2px;background:#000"></div>
<div class="a" style="left:520px;top:166px;width:1px;height:5px;background:#000"></div>
<div class="a" style="left:530px;top:168px;width:1px;height:2px;background:#000"></div>
<div class="a" style="left:501px;top:177px;width:1px;height:3px;background:#B4B19F"></div>
<div class="a" style="left:520px;top:177px;width:1px;height:3px;background:#B4B19F"></div>
<div class="a" style="left:530.0px;top:164px;width:20px;text-align:center;font-size:10px;line-height:11px;letter-spacing:-0.3px">14</div>
<div class="a" style="left:548px;top:168px;width:1px;height:2px;background:#000"></div>
<div class="a" style="left:558px;top:166px;width:1px;height:5px;background:#000"></div>
<div class="a" style="left:567px;top:168px;width:1px;height:2px;background:#000"></div>
<div class="a" style="left:539px;top:177px;width:1px;height:3px;background:#B4B19F"></div>
<div class="a" style="left:558px;top:177px;width:1px;height:3px;background:#B4B19F"></div>
<div class="a" style="left:567.8px;top:164px;width:20px;text-align:center;font-size:10px;line-height:11px;letter-spacing:-0.3px">15</div>
<div class="a" style="left:586px;top:168px;width:1px;height:2px;background:#000"></div>
<div class="a" style="left:596px;top:166px;width:1px;height:5px;background:#000"></div>
<div class="a" style="left:605px;top:168px;width:1px;height:2px;background:#000"></div>
<div class="a" style="left:577px;top:177px;width:1px;height:3px;background:#B4B19F"></div>
<div class="a" style="left:596px;top:177px;width:1px;height:3px;background:#B4B19F"></div>
<div class="a" style="left:605.5px;top:164px;width:20px;text-align:center;font-size:10px;line-height:11px;letter-spacing:-0.3px">16</div>
<div class="a" style="left:624px;top:168px;width:1px;height:2px;background:#000"></div>
<div class="a" style="left:633px;top:166px;width:1px;height:5px;background:#000"></div>
<div class="a" style="left:643px;top:168px;width:1px;height:2px;background:#000"></div>
<div class="a" style="left:615px;top:177px;width:1px;height:3px;background:#B4B19F"></div>
<div class="a" style="left:633px;top:177px;width:1px;height:3px;background:#B4B19F"></div>
<div class="a" style="left:643.2px;top:164px;width:20px;text-align:center;font-size:10px;line-height:11px;letter-spacing:-0.3px">17</div>
<div class="a" style="left:662px;top:168px;width:1px;height:2px;background:#000"></div>
<div class="a" style="left:671px;top:166px;width:1px;height:5px;background:#000"></div>
<div class="a" style="left:681px;top:168px;width:1px;height:2px;background:#000"></div>
<div class="a" style="left:652px;top:177px;width:1px;height:3px;background:#B4B19F"></div>
<div class="a" style="left:671px;top:177px;width:1px;height:3px;background:#B4B19F"></div>
<div class="a" style="left:681.0px;top:164px;width:20px;text-align:center;font-size:10px;line-height:11px;letter-spacing:-0.3px">18</div>
<div class="a" style="left:699px;top:168px;width:1px;height:2px;background:#000"></div>
<div class="a" style="left:709px;top:166px;width:1px;height:5px;background:#000"></div>
<div class="a" style="left:718px;top:168px;width:1px;height:2px;background:#000"></div>
<div class="a" style="left:690px;top:177px;width:1px;height:3px;background:#B4B19F"></div>
<div class="a" style="left:709px;top:177px;width:1px;height:3px;background:#B4B19F"></div>
<div class="a" style="left:718.8px;top:164px;width:20px;text-align:center;font-size:10px;line-height:11px;letter-spacing:-0.3px">19</div>
<div class="a" style="left:737px;top:168px;width:1px;height:2px;background:#000"></div>
<div class="a" style="left:747px;top:166px;width:1px;height:5px;background:#000"></div>
<div class="a" style="left:756px;top:168px;width:1px;height:2px;background:#000"></div>
<div class="a" style="left:728px;top:177px;width:1px;height:3px;background:#B4B19F"></div>
<div class="a" style="left:747px;top:177px;width:1px;height:3px;background:#B4B19F"></div>
<div class="a" style="left:756.5px;top:164px;width:20px;text-align:center;font-size:10px;line-height:11px;letter-spacing:-0.3px">20</div>
<div class="a" style="left:775px;top:168px;width:1px;height:2px;background:#000"></div>
<div class="a" style="left:784px;top:166px;width:1px;height:5px;background:#000"></div>
<div class="a" style="left:794px;top:168px;width:1px;height:2px;background:#000"></div>
<div class="a" style="left:765px;top:177px;width:1px;height:3px;background:#B4B19F"></div>
<div class="a" style="left:784px;top:177px;width:1px;height:3px;background:#B4B19F"></div>
<div class="a" style="left:794.2px;top:164px;width:20px;text-align:center;font-size:10px;line-height:11px;letter-spacing:-0.3px">21</div>
<div class="a" style="left:813px;top:168px;width:1px;height:2px;background:#000"></div>
<div class="a" style="left:822px;top:166px;width:1px;height:5px;background:#000"></div>
<div class="a" style="left:832px;top:168px;width:1px;height:2px;background:#000"></div>
<div class="a" style="left:803px;top:177px;width:1px;height:3px;background:#B4B19F"></div>
<div class="a" style="left:822px;top:177px;width:1px;height:3px;background:#B4B19F"></div>
<div class="a" style="left:832.0px;top:164px;width:20px;text-align:center;font-size:10px;line-height:11px;letter-spacing:-0.3px">22</div>
<div class="a" style="left:850px;top:168px;width:1px;height:2px;background:#000"></div>
<div class="a" style="left:860px;top:166px;width:1px;height:5px;background:#000"></div>
<div class="a" style="left:869px;top:168px;width:1px;height:2px;background:#000"></div>
<div class="a" style="left:841px;top:177px;width:1px;height:3px;background:#B4B19F"></div>
<div class="a" style="left:860px;top:177px;width:1px;height:3px;background:#B4B19F"></div>
<div class="a" style="left:869.8px;top:164px;width:20px;text-align:center;font-size:10px;line-height:11px;letter-spacing:-0.3px">23</div>
<div class="a" style="left:888px;top:168px;width:1px;height:2px;background:#000"></div>
<div class="a" style="left:898px;top:166px;width:1px;height:5px;background:#000"></div>
<div class="a" style="left:907px;top:168px;width:1px;height:2px;background:#000"></div>
<div class="a" style="left:879px;top:177px;width:1px;height:3px;background:#B4B19F"></div>
<div class="a" style="left:898px;top:177px;width:1px;height:3px;background:#B4B19F"></div>
<div class="a" style="left:907.5px;top:164px;width:20px;text-align:center;font-size:10px;line-height:11px;letter-spacing:-0.3px">24</div>
<div class="a" style="left:926px;top:168px;width:1px;height:2px;background:#000"></div>
<div class="a" style="left:935px;top:166px;width:1px;height:5px;background:#000"></div>
<div class="a" style="left:945px;top:168px;width:1px;height:2px;background:#000"></div>
<div class="a" style="left:917px;top:177px;width:1px;height:3px;background:#B4B19F"></div>
<div class="a" style="left:935px;top:177px;width:1px;height:3px;background:#B4B19F"></div>
<div class="a" style="left:945.2px;top:164px;width:20px;text-align:center;font-size:10px;line-height:11px;letter-spacing:-0.3px">25</div>
<div class="a" style="left:964px;top:168px;width:1px;height:2px;background:#000"></div>
<div class="a" style="left:973px;top:166px;width:1px;height:5px;background:#000"></div>
<div class="a" style="left:983px;top:168px;width:1px;height:2px;background:#000"></div>
<div class="a" style="left:954px;top:177px;width:1px;height:3px;background:#B4B19F"></div>
<div class="a" style="left:973px;top:177px;width:1px;height:3px;background:#B4B19F"></div>
<svg class="a" style="left:6px;top:159px" width="11" height="24" viewBox="0 0 11 24"><path d="M1.5 1.5h8v2l-4 5-4-5z" fill="#D4D1C4" stroke="#000"/><path d="M5.5 8.5l4 4.5v3.5h-8v-3.5z" fill="#D4D1C4" stroke="#000"/><rect x="1.5" y="16.5" width="8" height="6" fill="#fff" stroke="#000"/></svg>
<svg class="a" style="left:990px;top:167px" width="10" height="10" viewBox="0 0 10 10"><path d="M0.5 8.5v-3l4-4.5 4 4.5v3z" fill="#fff" stroke="#000"/></svg>
<div class="a" style="left:0px;top:158px;width:1px;height:531px;background:#ACA899"></div>
<div class="a" style="left:1px;top:158px;width:1px;height:531px;background:#716F64"></div>
<div class="a" style="left:2px;top:182px;width:1001px;height:490px;background:#fff"></div>
<div class="a" style="left:416px;top:182px;width:181px;height:32px;background:#000"></div>
<div class="a" style="left:417px;top:188px;color:#fff;font-size:15px;letter-spacing:0.5px;font-family:'Liberation Serif',serif">Отводы круглого сечения</div>
<div class="a" style="left:427px;top:214px;width:160px;height:182px;background:#000"></div>
<div class="a" style="left:425px;top:396px;width:164px;height:168px;background:#000"></div>
<svg class="a" style="left:427px;top:214px" width="160" height="182" viewBox="0 0 160 182"><path d="M57.8 14.8 L57.8 152.6" stroke="#F2F2F2" stroke-width="2.0" fill="none" stroke-linecap="round"/><path d="M101.6 15.6 L101.6 110.4" stroke="#F2F2F2" stroke-width="2.0" fill="none" stroke-linecap="round"/><path d="M57.8 21.9 L101.6 21.9" stroke="#F2F2F2" stroke-width="2.0" fill="none" stroke-linecap="round"/><ellipse cx="71.3" cy="21.7" rx="3.8" ry="2.3" fill="#F2F2F2"/><ellipse cx="90.4" cy="21.7" rx="3.8" ry="2.3" fill="#F2F2F2"/><text x="75" y="13" font-family="Liberation Sans" font-style="italic" font-weight="bold" font-size="12" fill="#F2F2F2">ℓ</text><path d="M39.0 42.2 L100.0 42.2" stroke="#F2F2F2" stroke-width="2.0" fill="none" stroke-linecap="round"/><path d="M52.0 42.2L43.0 44.8L43.0 39.6z" fill="#F2F2F2"/><ellipse cx="81.4" cy="42.4" rx="2.5" ry="2.2" fill="#F2F2F2"/><ellipse cx="92.4" cy="42.4" rx="3.8" ry="2.3" fill="#F2F2F2"/><text x="63" y="36.5" font-family="Liberation Sans" font-style="italic" font-weight="bold" font-size="11" fill="#F2F2F2">к</text><path d="M81.2 36.0 L81.2 93.0" stroke="#F2F2F2" stroke-width="2.0" fill="none" stroke-linecap="round"/><text x="14" y="38" font-family="Liberation Sans" font-style="italic" font-weight="bold" font-size="11" fill="#F2F2F2">1</text><path d="M25.0 36.0 L61.7 66.4" stroke="#F2F2F2" stroke-width="2.0" fill="none" stroke-linecap="round"/><path d="M32.8 57.8 L95.3 57.8" stroke="#F2F2F2" stroke-width="2.0" fill="none" stroke-linecap="round"/><path d="M95.3 57.8 L128.0 86.0" stroke="#F2F2F2" stroke-width="2.0" fill="none" stroke-linecap="round"/><path d="M128.0 86.0 L57.0 152.6" stroke="#F2F2F2" stroke-width="2.0" fill="none" stroke-linecap="round"/><path d="M95.3 57.8 L67.2 126.8" stroke="#F2F2F2" stroke-width="2.0" fill="none" stroke-linecap="round"/><path d="M67.2 126.8 L72.0 136.0" stroke="#F2F2F2" stroke-width="2.0" fill="none" stroke-linecap="round"/><path d="M39.0 59.4 L39.0 126.0" stroke="#F2F2F2" stroke-width="2.0" fill="none" stroke-linecap="round"/><path d="M39.0 59.0L41.8 70.0L36.2 70.0z" fill="#F2F2F2"/><path d="M39.0 125.0L36.2 114.0L41.8 114.0z" fill="#F2F2F2"/><text x="31" y="99" font-family="Liberation Sans" font-style="italic" font-weight="bold" font-size="12" fill="#F2F2F2" transform="rotate(-90 31 99)">d</text><path d="M32.0 126.8 L67.2 126.8" stroke="#F2F2F2" stroke-width="2.0" fill="none" stroke-linecap="round"/><path d="M47.7 93.5 L151.6 93.5" stroke="#F2F2F2" stroke-width="2.0" fill="none" stroke-linecap="round" stroke-dasharray="6 3 1.5 3"/><path d="M81.0 93.5 L107.8 118.0" stroke="#F2F2F2" stroke-width="2.0" fill="none" stroke-linecap="round" stroke-dasharray="5 3 1.5 3"/><path d="M101.6 112.7 L152.3 112.7" stroke="#F2F2F2" stroke-width="2.0" fill="none" stroke-linecap="round"/><path d="M143.7 71.8 L143.7 133.2" stroke="#F2F2F2" stroke-width="2.0" fill="none" stroke-linecap="round"/><path d="M143.7 92.3L140.7 80.3L146.7 80.3z" fill="#F2F2F2"/><path d="M143.7 114.9L146.7 126.9L140.7 126.9z" fill="#F2F2F2"/><text x="127" y="128" font-family="Liberation Sans" font-style="italic" font-weight="bold" font-size="11" fill="#F2F2F2" transform="rotate(90 127 128)">a</text><path d="M82.8 116.6 L99.2 137.0" stroke="#F2F2F2" stroke-width="2.0" fill="none" stroke-linecap="round"/><text x="100" y="146" font-family="Liberation Sans" font-style="italic" font-weight="bold" font-size="11" fill="#F2F2F2">1</text><text x="6" y="164" font-family="Liberation Sans" font-style="italic" font-weight="bold" font-size="10" fill="#F2F2F2">45°</text><path d="M33.6 158.0 L54.0 144.8" stroke="#F2F2F2" stroke-width="2.0" fill="none" stroke-linecap="round"/><path d="M40.0 137.0L47.3 137.1L46.1 140.9z" fill="#F2F2F2"/><path d="M40.0 137.0 L53.0 139.0" stroke="#F2F2F2" stroke-width="2.0" fill="none" stroke-linecap="round"/><path d="M76.0 154.0L70.7 149.0L74.1 147.0z" fill="#F2F2F2"/><path d="M70.0 145.0 L76.0 154.0" stroke="#F2F2F2" stroke-width="2.0" fill="none" stroke-linecap="round"/><path d="M44 134 Q55 132 66 141" stroke="#F2F2F2" stroke-width="1.4" fill="none"/></svg>
<svg class="a" style="left:425px;top:396px" width="164" height="168" viewBox="0 0 164 168"><path d="M3.2 33.6 L77.7 33.6" stroke="#F2F2F2" stroke-width="2.0" fill="none" stroke-linecap="round"/><path d="M24.0 33.6 L24.0 93.2" stroke="#F2F2F2" stroke-width="2.0" fill="none" stroke-linecap="round"/><path d="M24.0 34.5L26.8 44.5L21.2 44.5z" fill="#F2F2F2"/><path d="M24.0 93.0L21.2 81.0L26.8 81.0z" fill="#F2F2F2"/><path d="M41.6 33.6 L41.6 153.3" stroke="#F2F2F2" stroke-width="2.0" fill="none" stroke-linecap="round"/><path d="M76.0 33.6 L55.3 94.0" stroke="#F2F2F2" stroke-width="2.0" fill="none" stroke-linecap="round"/><path d="M77.7 33.6 L125.0 83.6" stroke="#F2F2F2" stroke-width="2.0" fill="none" stroke-linecap="round"/><path d="M33.6 63.3 L65.7 63.3" stroke="#F2F2F2" stroke-width="2.0" fill="none" stroke-linecap="round" stroke-dasharray="5 3"/><path d="M65.7 63.3 L93.7 94.0" stroke="#F2F2F2" stroke-width="2.0" fill="none" stroke-linecap="round" stroke-dasharray="5 3"/><text x="72" y="14.5" font-family="Liberation Sans" font-style="italic" font-weight="bold" font-size="11" fill="#F2F2F2">1</text><path d="M74.5 17.6 L60.0 39.2" stroke="#F2F2F2" stroke-width="2.0" fill="none" stroke-linecap="round"/><text x="113" y="47.5" font-family="Liberation Sans" font-style="italic" font-weight="bold" font-size="11" fill="#F2F2F2">2</text><path d="M112.0 42.4 L90.5 58.5" stroke="#F2F2F2" stroke-width="2.0" fill="none" stroke-linecap="round"/><text x="18" y="67" font-family="Liberation Sans" font-style="italic" font-weight="bold" font-size="12" fill="#F2F2F2" transform="rotate(-90 18 67)">d</text><path d="M19.2 94.0 L55.3 94.0" stroke="#F2F2F2" stroke-width="2.0" fill="none" stroke-linecap="round"/><path d="M55.3 94.0 L62.5 103.6 L61.7 112.4" stroke="#F2F2F2" stroke-width="2.0" fill="none" stroke-linecap="round"/><path d="M62.5 103.6 L125.0 83.6" stroke="#F2F2F2" stroke-width="2.0" fill="none" stroke-linecap="round"/><path d="M125.0 83.6 L125.0 152.5" stroke="#F2F2F2" stroke-width="2.0" fill="none" stroke-linecap="round"/><path d="M41.6 112.4 L125.0 112.4" stroke="#F2F2F2" stroke-width="2.0" fill="none" stroke-linecap="round"/><path d="M93.7 94.0 L93.7 137.3" stroke="#F2F2F2" stroke-width="2.0" fill="none" stroke-linecap="round"/><path d="M41.6 131.7 L93.7 131.7" stroke="#F2F2F2" stroke-width="2.0" fill="none" stroke-linecap="round"/><path d="M42.5 131.7L52.5 128.9L52.5 134.5z" fill="#F2F2F2"/><path d="M92.8 131.7L82.8 134.5L82.8 128.9z" fill="#F2F2F2"/><text x="62" y="126" font-family="Liberation Sans" font-style="italic" font-weight="bold" font-size="11" fill="#F2F2F2">u</text><path d="M41.6 148.5 L125.0 148.5" stroke="#F2F2F2" stroke-width="2.0" fill="none" stroke-linecap="round"/><path d="M42.5 148.5L52.5 145.7L52.5 151.3z" fill="#F2F2F2"/><path d="M124.0 148.5L114.0 151.3L114.0 145.7z" fill="#F2F2F2"/><text x="69" y="145" font-family="Liberation Sans" font-style="italic" font-weight="bold" font-size="11" fill="#F2F2F2">m</text><text x="7" y="124.5" font-family="Liberation Sans" font-style="italic" font-weight="bold" font-size="10" fill="#F2F2F2">90°</text><path d="M25.6 118.0 L52.8 102.8" stroke="#F2F2F2" stroke-width="2.0" fill="none" stroke-linecap="round"/><path d="M42.4 101.2 Q53 103 55.3 112.4" stroke="#F2F2F2" stroke-width="1.4" fill="none"/><path d="M55.0 112.0L51.9 106.5L55.8 105.7z" fill="#F2F2F2"/><text x="144" y="99.6" font-family="Liberation Sans" font-style="italic" font-weight="bold" font-size="11" fill="#F2F2F2">1</text><path d="M120.0 102.0 L143.3 94.8" stroke="#F2F2F2" stroke-width="2.0" fill="none" stroke-linecap="round"/></svg>
<div class="a" style="left:448px;top:564px;font-size:13px;font-family:'Liberation Serif',serif">1 - стакан; 2 - звено</div>
<div class="a" style="left:480px;top:588px;font-size:16px;font-family:'Liberation Serif',serif">Черт. 4</div>
<div class="a" style="left:905px;top:614px;font-size:16px;letter-spacing:2.75px;font-family:'Liberation Serif',serif">Таблица 4</div>
<div class="a" style="left:462px;top:634px;font-size:16px;font-family:'Liberation Serif',serif">Размеры, мм</div>
<div class="a" style="left:12px;top:660px;width:982px;height:1px;background:#000"></div>
<div class="a" style="left:12px;top:660px;width:1px;height:12px;background:#000"></div>
<div class="a" style="left:128px;top:660px;width:1px;height:12px;background:#000"></div>
<div class="a" style="left:993px;top:660px;width:1px;height:12px;background:#000"></div>
<div class="a" style="left:0;top:660px;width:1003px;height:12px;overflow:hidden"><div class="a" style="left:521px;top:2px;font-size:14px;letter-spacing:-0.2px;font-family:'Liberation Serif',serif">Отвод с углом</div></div>
<div class="a" style="left:1003px;top:158px;width:21px;height:531px;background:#ECE9D8"></div>
<div class="a chk" style="left:1003px;top:181px;width:21px;height:423px"></div>
<div class="a" style="left:1004px;top:158px;width:18px;height:6px;background:#EFEDE2;border-bottom:1px solid #555;border-right:1px solid #8E8B7D"></div>
<div class="a" style="left:1005px;top:164px;width:17px;height:17px;background:#EEEDE4;border-right:1px solid #716F64;border-bottom:1px solid #716F64;border-top:1px solid #fff;border-left:1px solid #fff"></div>
<div class="a" style="left:1009px;top:170px;width:0;height:0;border-left:4.5px solid transparent;border-right:4.5px solid transparent;border-bottom:4.5px solid #000"></div>
<div class="a" style="left:1005px;top:297px;width:17px;height:12px;background:#EAE8DA;border-right:2px solid #5E5B4E;border-bottom:2px solid #5E5B4E;border-top:1px solid #fff;border-left:1px solid #fff"></div>
<div class="a" style="left:1005px;top:604px;width:17px;height:17px;background:#EEEDE4;border-right:1px solid #716F64;border-bottom:1px solid #716F64;border-top:1px solid #fff;border-left:1px solid #fff"></div>
<div class="a" style="left:1009px;top:610px;width:0;height:0;border-left:4.5px solid transparent;border-right:4.5px solid transparent;border-top:4.5px solid #000"></div>
<div class="a" style="left:1004px;top:621px;width:18px;height:51px;background:#ECE9D8"></div>
<svg class="a" style="left:1010px;top:625px" width="7" height="8" viewBox="0 0 7 8"><path d="M0.5 3.5l3-3 3 3zM0.5 7l3-3 3 3z" fill="#0A0A90"/></svg>
<svg class="a" style="left:1009px;top:641px" width="9" height="9" viewBox="0 0 9 9"><circle cx="4.5" cy="4.5" r="3.3" fill="#9A9A9A" stroke="#1A1A1A" stroke-width="1.2"/><circle cx="3.8" cy="3.8" r="1.2" fill="#D8D8D8"/></svg>
<svg class="a" style="left:1010px;top:659px" width="7" height="8" viewBox="0 0 7 8"><path d="M0.5 0.5l3 3 3-3zM0.5 4l3 3 3-3z" fill="#0A0A90"/></svg>
<div class="a" style="left:2px;top:672px;width:1001px;height:17px;background:#ECE9D8"></div>
<div class="a chk" style="left:705px;top:672px;width:283px;height:16px"></div>
<div class="a" style="left:86px;top:672px;width:619px;height:17px;background:#ECE9D8;border-top:1px solid #fff;border-left:1px solid #fff;border-right:2px solid #5E5B4E;border-bottom:2px solid #5E5B4E"></div>
<div class="a" style="left:70px;top:672px;width:16px;height:17px;background:#ECE9D8;border-right:1px solid #716F64;border-bottom:1px solid #716F64;border-top:1px solid #fff;border-left:1px solid #fff"></div>
<div class="a" style="left:75px;top:676px;width:0;height:0;border-top:4.5px solid transparent;border-bottom:4.5px solid transparent;border-right:4.5px solid #000"></div>
<div class="a" style="left:988px;top:672px;width:17px;height:17px;background:#EEEDE4;border-right:1px solid #716F64;border-bottom:1px solid #716F64;border-top:1px solid #fff;border-left:1px solid #fff"></div>
<div class="a" style="left:995px;top:676px;width:0;height:0;border-top:4.5px solid transparent;border-bottom:4.5px solid transparent;border-left:4.5px solid #000"></div>
<div class="a" style="left:19px;top:672px;width:17px;height:17px;background:#D2DDF0;border:1px solid #5676AE"></div>
<svg class="a" style="left:7px;top:675px" width="9" height="9" viewBox="0 0 9 9"><path d="M0 1.5h8M0 3.5h8M0 5.5h8M0 7.5h8" stroke="#000" stroke-width="1"/></svg>
<svg class="a" style="left:24px;top:675px" width="9" height="9" viewBox="0 0 9 9"><rect x="0.5" y="1.5" width="6" height="5" fill="#fff" stroke="#000"/><circle cx="6" cy="6" r="2.5" fill="#2A3A8A" stroke="#000"/></svg>
<svg class="a" style="left:41px;top:675px" width="10" height="9" viewBox="0 0 10 9"><rect x="0.5" y="1.5" width="8" height="6" fill="#fff" stroke="#000"/><path d="M2.5 3.5h4M2.5 5.5h4" stroke="#000"/></svg>
<svg class="a" style="left:57px;top:675px" width="9" height="9" viewBox="0 0 9 9"><path d="M0 1.5h1M3 1.5h5M2 4h6M0 6.5h1M3 6.5h5" stroke="#000"/></svg>
<div class="a" style="left:0px;top:688px;width:1024px;height:1px;background:#8E8B7D"></div>
<div class="a" style="left:0px;top:689px;width:1024px;height:1px;background:#FCFBF7"></div>
<div class="a" style="left:0px;top:690px;width:624px;height:27px;background:#EFEDE2"></div>
<div class="a grip" style="left:2px;top:695px;height:17px"></div>
<div class="a" style="left:11px;top:698px;">Дейс<u>т</u>вия</div>
<div class="a" style="left:63px;top:702px;width:0;height:0;border-left:2.5px solid transparent;border-right:2.5px solid transparent;border-top:3px solid #000"></div>
<svg class="a" style="left:80px;top:694px" width="12" height="16" viewBox="0 0 12 16"><path d="M1.5 1.5v11l3-3 2.5 5 1.5-.8-2.3-4.7h4z" fill="#fff" stroke="#222"/></svg>
<div class="a" style="left:98px;top:694px;width:1px;height:20px;background:#C9C6B6"></div>
<div class="a" style="left:104px;top:698px;">Автофи<u>г</u>уры</div>
<div class="a" style="left:173px;top:702px;width:0;height:0;border-left:2.5px solid transparent;border-right:2.5px solid transparent;border-top:3px solid #000"></div>
<svg class="a" style="left:186px;top:696px" width="14" height="14" viewBox="0 0 14 14"><path d="M1 1l11 11" stroke="#222" stroke-width="1.2"/></svg>
<svg class="a" style="left:210px;top:696px" width="14" height="14" viewBox="0 0 14 14"><path d="M1 1l9 9" stroke="#222" stroke-width="1.2"/><path d="M12 12l-5-1.5 3.5-3.5z" fill="#222"/></svg>
<svg class="a" style="left:231px;top:697px" width="17" height="14" viewBox="0 0 17 14"><rect x="0.5" y="0.5" width="15" height="12" fill="none" stroke="#222"/></svg>
<svg class="a" style="left:253px;top:697px" width="17" height="14" viewBox="0 0 17 14"><ellipse cx="8" cy="6.5" rx="7.5" ry="6" fill="none" stroke="#222"/></svg>
<svg class="a" style="left:277px;top:696px" width="16" height="16" viewBox="0 0 16 16"><rect x="0.5" y="0.5" width="14" height="14" fill="#fff" stroke="#333"/><path d="M3 7l2.5-4.5 2.5 4.5M4 5.5h3" stroke="#333" fill="none"/><path d="M9 3.5h4M9 5.5h4M9 7.5h4M2 9.5h11M2 11.5h11M2 13.5h11" stroke="#333"/></svg>
<svg class="a" style="left:300px;top:696px" width="16" height="16" viewBox="0 0 16 16"><path d="M1 14l8-13h3v13h-3l-1-4h-3l-2 4zM6 8h2l-0.5-4z" fill="#4A5AB0"/><path d="M12 1l2 2v13h-2z" fill="#8B94C8"/></svg>
<svg class="a" style="left:323px;top:696px" width="16" height="16" viewBox="0 0 16 16"><circle cx="8" cy="3" r="1.8" fill="#D44"/><circle cx="13" cy="8" r="1.8" fill="#D44"/><circle cx="8" cy="13" r="1.8" fill="#447"/><circle cx="3" cy="8" r="1.8" fill="#4A4"/><path d="M5 4a5 5 0 0 1 6 1M12 11a5 5 0 0 1-3 2M4 11a5 5 0 0 1-1-1" stroke="#447" fill="none"/></svg>
<svg class="a" style="left:347px;top:696px" width="16" height="16" viewBox="0 0 16 16"><rect x="0.5" y="0.5" width="14" height="14" fill="#fff" stroke="#444" stroke-dasharray="1 1"/><path d="M7 3a3 3 0 1 1 0 6 3 3 0 1 1 0-6zM4 14c0-4 6-4 6 0" stroke="#A03030" fill="#E8B8B8"/></svg>
<svg class="a" style="left:370px;top:696px" width="16" height="16" viewBox="0 0 16 16"><rect x="0.5" y="0.5" width="15" height="14" fill="#F5F0A0" stroke="#444"/><path d="M1 14l5-6 3 3 2-2 4 5z" fill="#777"/><circle cx="12" cy="4" r="2" fill="none" stroke="#444"/></svg>
<div class="a" style="left:391px;top:694px;width:1px;height:20px;background:#C9C6B6"></div>
<svg class="a" style="left:398px;top:695px" width="16" height="16" viewBox="0 0 16 16"><path d="M3 6l5-4 5 5-5 5z" fill="#fff" stroke="#333"/><path d="M12 6c2 0 3 2 3 4" stroke="#55a" stroke-width="2" fill="none"/><rect x="1" y="13" width="15" height="3" fill="#F0F000"/></svg>
<div class="a" style="left:421px;top:703px;width:0;height:0;border-left:2.5px solid transparent;border-right:2.5px solid transparent;border-top:3px solid #000"></div>
<svg class="a" style="left:431px;top:694px" width="17" height="17" viewBox="0 0 17 17"><path d="M5 12l8-9 2 1-8 9z" fill="#fff" stroke="#333"/><path d="M2 12h3" stroke="#444"/><rect x="1" y="14" width="16" height="3" fill="#0010D0"/></svg>
<div class="a" style="left:455px;top:703px;width:0;height:0;border-left:2.5px solid transparent;border-right:2.5px solid transparent;border-top:3px solid #000"></div>
<svg class="a" style="left:466px;top:694px" width="16" height="17" viewBox="0 0 16 17"><path d="M2 12L7.5 1h1L14 12h-3l-1.2-3H6.2L5 12zM6.9 7h2.2L8 4z" fill="#3A3A9A"/><rect x="0" y="14" width="16" height="3" fill="#800080"/></svg>
<div class="a" style="left:489px;top:703px;width:0;height:0;border-left:2.5px solid transparent;border-right:2.5px solid transparent;border-top:3px solid #000"></div>
<svg class="a" style="left:500px;top:697px" width="16" height="12" viewBox="0 0 16 12"><rect x="0" y="1" width="16" height="3" fill="#333"/><rect x="0" y="6" width="16" height="1.5" fill="#333"/><rect x="0" y="9" width="16" height="3" fill="#333"/></svg>
<svg class="a" style="left:522px;top:697px" width="16" height="12" viewBox="0 0 16 12"><path d="M0 1.5h16M0 4.5h2M4 4.5h2M8 4.5h2M12 4.5h2M0 7.5h1M3 7.5h1M6 7.5h1M9 7.5h1M12 7.5h1M15 7.5h1M0 10.5h16" stroke="#333" stroke-dasharray=""/></svg>
<svg class="a" style="left:546px;top:695px" width="16" height="16" viewBox="0 0 16 16"><path d="M2 4h13M12 1l3 3-3 3M14 12H1M4 9l-3 3 3 3" stroke="#333" stroke-width="1.3" fill="none"/></svg>
<svg class="a" style="left:569px;top:696px" width="16" height="16" viewBox="0 0 16 16"><rect x="2.5" y="2.5" width="11" height="11" fill="#778" stroke="#333"/><rect x="0.5" y="0.5" width="11" height="11" fill="#3D8F9A" stroke="#234"/></svg>
<svg class="a" style="left:591px;top:695px" width="17" height="17" viewBox="0 0 17 17"><path d="M0.5 5.5l5-5h11v11l-5 5h-11z" fill="#3D8F9A" stroke="#444"/><path d="M0.5 5.5h11v11M11.5 5.5l5-5" stroke="#444" fill="none"/><path d="M1 5l5-4h10l-4.5 4.5z" fill="#C8ECF0"/><path d="M12 6l4-4v9.5l-4 4z" fill="#A8D8E0"/></svg>
<div class="a" style="left:615px;top:708px;width:0;height:0;border-left:2.5px solid transparent;border-right:2.5px solid transparent;border-top:3px solid #000"></div>
<div class="a" style="left:0px;top:717px;width:1024px;height:1px;background:#ACA899"></div>
<div class="a" style="left:0px;top:718px;width:1024px;height:20px;background:#ECE9D8"></div>
<div class="a" style="left:6px;top:720px;width:1px;height:16px;background:#E4E1D2"></div>
<div class="a" style="left:76px;top:720px;width:1px;height:16px;background:#E4E1D2"></div>
<div class="a" style="left:196px;top:720px;width:1px;height:16px;background:#E4E1D2"></div>
<div class="a" style="left:372px;top:720px;width:1px;height:16px;background:#E4E1D2"></div>
<div class="a" style="left:504px;top:720px;width:1px;height:16px;background:#E4E1D2"></div>
<div class="a" style="left:620px;top:720px;width:1px;height:16px;background:#E4E1D2"></div>
<div class="a" style="left:830px;top:720px;width:1px;height:16px;background:#E4E1D2"></div>
<div class="a" style="left:10px;top:723px;color:#A9A697">Стр.</div>
<div class="a" style="left:77px;top:723px;color:#A9A697">Разд</div>
<div class="a" style="left:207px;top:723px;color:#A9A697">На</div>
<div class="a" style="left:268px;top:723px;color:#A9A697">Ст</div>
<div class="a" style="left:313px;top:723px;color:#A9A697">Кол</div>
<div class="a" style="left:378px;top:723px;color:#A9A697">ЗАП</div>
<div class="a" style="left:408px;top:723px;color:#A9A697">ИСПР</div>
<div class="a" style="left:445px;top:723px;color:#A9A697">ВДЛ</div>
<div class="a" style="left:477px;top:723px;color:#A9A697">ЗАМ</div>
<div class="a" style="left:508px;top:723px;">русский (Ро</div>
<div class="a" style="left:0px;top:738px;width:1024px;height:4px;background:linear-gradient(to bottom,#3A80E8,#2460D8)"></div>
<div class="a" style="left:0px;top:738px;width:93px;height:4px;background:linear-gradient(to bottom,#6CC46C,#3A9A3A)"></div>
<div class="a" style="left:967px;top:738px;width:57px;height:4px;background:#1C8EEC"></div>
<div class="a" style="left:937px;top:727px;font-weight:bold;font-size:11px;line-height:11px;color:#fff;letter-spacing:0.9px;text-shadow:-1px 0 #000,1px 0 #000,0 -1px #000,0 1px #000,1px 1px #000,-1px -1px #000,1px -1px #000,-1px 1px #000">CMET4UK.RU</div>
</body></html>
